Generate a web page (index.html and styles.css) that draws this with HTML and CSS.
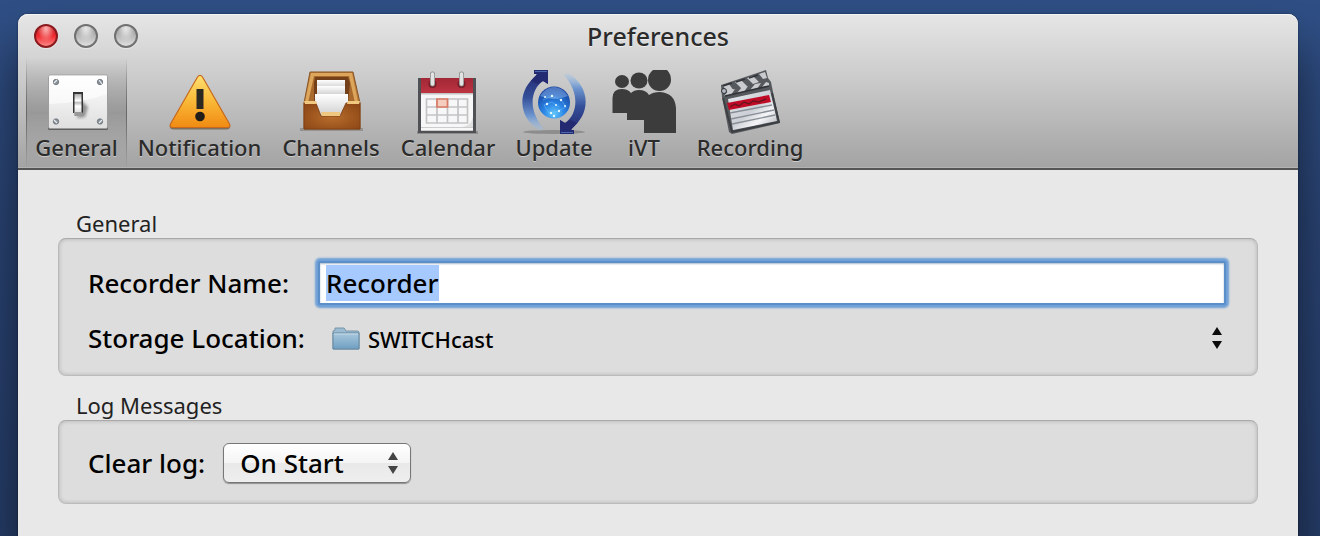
FILE: index.html
```html
<!DOCTYPE html>
<html lang="en">
<head>
<meta charset="utf-8">
<title>Preferences</title>
<link rel="stylesheet" href="styles.css">
</head>
<body>
<main class="window">
  <header class="chrome">
    <div class="titlebar">
      <div class="lights">
        <button class="light light-close" aria-label="Close"></button>
        <button class="light" aria-label="Minimize"></button>
        <button class="light" aria-label="Zoom"></button>
      </div>
      <h1 class="title">Preferences</h1>
    </div>
    <nav class="toolbar" aria-label="Preference panes">
      <button class="tool tool-active" aria-pressed="true">
        <svg class="icon" viewBox="0 0 64 64" aria-hidden="true">
          <defs>
            <linearGradient id="plate" x1="0" y1="0" x2="0" y2="1"><stop offset="0" stop-color="#fff"/><stop offset="1" stop-color="#dfdfdf"/></linearGradient>
            <linearGradient id="lever" x1="0" y1="0" x2="0" y2="1"><stop offset="0" stop-color="#aaa"/><stop offset=".3" stop-color="#fff"/><stop offset=".4" stop-color="#bbb"/><stop offset=".55" stop-color="#fff"/><stop offset="1" stop-color="#ccc"/></linearGradient>
            <filter id="soft"><feGaussianBlur stdDeviation="1.6"/></filter>
          </defs>
          <rect x="3" y="6" width="60" height="54" rx="1.5" fill="#606060"/>
          <rect x="3.500" y="5" width="59" height="53.500" rx="1.500" fill="url(#plate)" stroke="#999" stroke-width=".7"/>
          <path d="M4 34Q38 33 62 24V6H4Z" fill="#fff" opacity=".6"/>
          <path d="M36 30l7 7-3 10-8 1Z" fill="#555" opacity=".6" filter="url(#soft)"/>
          <path d="M28 22h10v21H28Z" fill="#333"/>
          <path d="M29.500 24h7v19l-1 3h-6Z" fill="url(#lever)"/>
          <path d="M29 42h8.500l-1 4h-7Z" fill="#999"/>
          <g fill="#8b9299" stroke="#5d646b" stroke-width=".7"><circle cx="11" cy="12" r="2.700"/><circle cx="55" cy="12" r="2.700"/><circle cx="11" cy="51.500" r="2.700"/><circle cx="55" cy="51.500" r="2.700"/></g>
          <path d="M9 13l3-3M54 10l3 4M9 50l3 3M54 53l3-3" stroke="#e8edf2" stroke-width="1.200"/>
        </svg>
        <span>General</span>
      </button>
      <button class="tool">
        <svg class="icon" viewBox="0 0 64 64" aria-hidden="true">
          <defs><linearGradient id="warn" x1="0" y1="0" x2="0" y2="1"><stop offset="0" stop-color="#ffdf72"/><stop offset=".45" stop-color="#fbbd3c"/><stop offset="1" stop-color="#f08a12"/></linearGradient></defs>
          <path d="M29 8Q32 3 35 8L62 55Q63 59 59 59.500H5Q1 59 2 55Z" fill="#6a5a46" opacity=".75"/>
          <path d="M29.500 7Q32 3.500 34.500 7L61.500 54Q63 57.500 59 57.500H5Q1 57.500 2.500 54Z" fill="url(#warn)" stroke="#c8691d" stroke-width="1.200"/>
          <path d="M28.500 19h7v20h-7Z" fill="#2c2923"/><circle cx="32" cy="46.500" r="4.800" fill="#211d18"/>
        </svg>
        <span>Notification</span>
      </button>
      <button class="tool">
        <svg class="icon" viewBox="0 0 64 64" aria-hidden="true">
          <defs>
            <radialGradient id="wood" cx=".5" cy=".55" r=".65"><stop offset="0" stop-color="#b66d2c"/><stop offset="1" stop-color="#8e4716"/></radialGradient>
            <linearGradient id="paper" x1="0" y1="0" x2="0" y2="1"><stop offset="0" stop-color="#fff"/><stop offset="1" stop-color="#cfcfcf"/></linearGradient>
          </defs>
          <path d="M1 58h63v3H1Z" fill="#555" opacity=".35"/>
          <path d="M11 2h43l7 31v26H5V33Z" fill="#b87a38" stroke="#8b5524"/>
          <path d="M12 3h41l6 29H6Z" fill="#dca65c"/>
          <path d="M15 6h35l6 27H9Z" fill="#a9692c"/>
          <path d="M16 7h33l2 6-2 20H15V13Z" fill="#74401a"/>
          <path d="M18 10h28v8H18Z" fill="url(#paper)"/><path d="M18 16h28v9H18Z" fill="url(#paper)"/><path d="M16 24h33v13l-7 9H22l-6-9Z" fill="url(#paper)"/>
          <path d="M5 33h12l5 13h19l6-13h14v26H5Z" fill="url(#wood)" stroke="#7b3c12" stroke-width=".8"/>
          <path d="M5 31h12l1 3H6ZM61 31H49l-1 3h12ZM22 42h19v4H23Z" fill="#efc781"/>
        </svg>
        <span>Channels</span>
      </button>
      <button class="tool">
        <svg class="icon" viewBox="0 0 64 64" aria-hidden="true">
          <defs><linearGradient id="red" x1="0" y1="0" x2="0" y2="1"><stop offset="0" stop-color="#a12735"/><stop offset="1" stop-color="#bd3442"/></linearGradient></defs>
          <path d="M1 61h61v3H1Z" fill="#555" opacity=".4"/>
          <rect x="2" y="8" width="58" height="55" fill="#505154"/>
          <path d="M5 23h52v37H5Z" fill="#f7f7f7"/><path d="M5 57h52v1H5ZM5 60h52v1H5Z" fill="#ccc"/>
          <path d="M5 8h52v15H5Z" fill="url(#red)"/><path d="M5 23h52v1.500H5Z" fill="#c3c3c3"/>
          <path d="M10.500 29h41v24h-41ZM21 29v24M31.500 29v24M42 29v24M11 37h41M11 45h41" fill="none" stroke="#c3c3c6" stroke-width="1.700"/>
          <path d="M21 29h10.500v8H21Z" fill="#f4cdbf" stroke="#d87963" stroke-width="1.700"/>
          <path d="M57 47v10H46q9-1 11-10" fill="#e0e0e0"/>
          <circle cx="16.500" cy="14" r="4" fill="#781c28"/><circle cx="45.500" cy="14" r="4" fill="#781c28"/>
          <path d="M16.500 4v10M45.500 4v10" stroke="#888" stroke-width="5" stroke-linecap="round"/><path d="M16.500 4v10M45.500 4v10" stroke="#e3e3e3" stroke-width="3.500" stroke-linecap="round"/>
        </svg>
        <span>Calendar</span>
      </button>
      <button class="tool">
        <svg class="icon" viewBox="0 0 64 64" aria-hidden="true">
          <defs>
            <linearGradient id="arcl" x1="0" y1="0" x2="0" y2="1"><stop offset="0" stop-color="#20256c"/><stop offset=".45" stop-color="#344f99"/><stop offset=".75" stop-color="#6d95ce"/><stop offset="1" stop-color="#9dc4f0" stop-opacity=".2"/></linearGradient>
            <linearGradient id="arcr" x1="0" y1="1" x2="0" y2="0"><stop offset="0" stop-color="#20256c"/><stop offset=".45" stop-color="#344f99"/><stop offset=".75" stop-color="#6d95ce"/><stop offset="1" stop-color="#9dc4f0" stop-opacity=".2"/></linearGradient>
            <radialGradient id="globe" cx=".5" cy=".85" r=".8"><stop offset="0" stop-color="#62c6fb"/><stop offset=".4" stop-color="#2c86e6"/><stop offset="1" stop-color="#153d9b"/></radialGradient>
          </defs>
          <ellipse cx="32" cy="62" rx="31" ry="2" fill="#555" opacity=".4"/>
          <path d="M12 0H26V14L21 11C8 20 6 41 22 59L18 61C-5 47-5 20 15 5Z" fill="url(#arcl)"/>
          <path d="M52 64H38V50L43 53C56 44 58 23 42 5L46 3C69 17 69 44 49 59Z" fill="url(#arcr)"/>
          <path d="M12 0H26V14L21 11 16 14 9 11 15 4 12 4ZM52 64H38V50L43 53 48 50 55 53 49 60 52 60Z" fill="#242a72"/>
          <path d="M13 1.500H25M39 62.500H51" stroke="#4a67ae"/>
          <circle cx="32" cy="32.500" r="16" fill="url(#globe)"/>
          <path d="M18 26Q24 17 32 17T46 26Q32 32 18 26" fill="#a9d3fa" opacity=".4"/>
          <path d="M21 30l9-4 9 4 5 7-8 4-9 2-5-8 8-3 7 5" fill="none" stroke="#75c8ff" stroke-width="1" opacity=".45"/>
          <g fill="#e3f8ff"><circle cx="23" cy="27" r="1"/><circle cx="30" cy="26" r="1.200"/><circle cx="39" cy="30" r="1.200"/><circle cx="25" cy="34" r="1.200"/><circle cx="34" cy="35" r="1"/><circle cx="37" cy="41" r="1.200"/><circle cx="43" cy="36" r="1"/><circle cx="29" cy="43" r="1.200"/><circle cx="32" cy="46" r="1.200"/></g>
        </svg>
        <span>Update</span>
      </button>
      <button class="tool">
        <svg class="icon" viewBox="0 0 64 64" aria-hidden="true">
          <g fill="#3c3c3c"><ellipse cx="10" cy="11.500" rx="7" ry="6.500"/><ellipse cx="27" cy="10.500" rx="8.500" ry="8"/><path d="M41 0h14q4 4 4 10a11.500 11 0 0 1-23 0q0-6 5-10Z"/>
          <path d="M.5 43V28q0-9 9.500-9 6 0 9 4 3-3 8-3 7 0 10 5 4-3 11-3 15 1 16 16v25H32V50H15v-7Z"/></g>
        </svg>
        <span>iVT</span>
      </button>
      <button class="tool">
        <svg class="icon" viewBox="0 0 64 64" aria-hidden="true">
          <defs><linearGradient id="slate" x1="0" y1="0" x2="1" y2="1"><stop offset="0" stop-color="#e6e8ec"/><stop offset=".5" stop-color="#ccd0d6"/><stop offset=".7" stop-color="#f5f5f8"/><stop offset="1" stop-color="#a9adb3"/></linearGradient></defs>
          <path d="M3 15L48 0 50 8 53 12 55 22 62 53 14 64 11 62 4 27Z" fill="#55585c"/>
          <path d="M10 29L52 20 59 51 15 60Z" fill="url(#slate)"/>
          <path d="M9 33L51 25 53 32 11 40Z" fill="#c00a26"/>
          <path d="M12 37l5-3 4 2 5-4 5 2 4-3 6 1 7-3" fill="none" stroke="#6a1420" stroke-width="1.400"/>
          <path d="M12 43L54 35M13 49L56 40M14 54L57 45" stroke="#888e96" stroke-width="1.300"/>
          <path d="M5 16l6-2 5 7-6 2ZM17 12l6-2 6 6-6 2ZM29 8l6-2 6 6-6 2ZM41 4l6-2 2 6-4 1ZM6 26l5-6 6-1-4 6ZM19 23l5-6 6-1-4 6ZM32 20l5-6 6-1-4 6ZM44 17l4-5 3 1 0 3Z" fill="#c9cbce"/>
          <path d="M5 16l9-3M18 12l9-3M31 8l9-3M7 26L51 16" stroke="#303338" stroke-width="1.600"/>
          <circle cx="6" cy="21" r="2.500" fill="#aeb6c2" stroke="#333"/>
          <path d="M5 28l9 34 47-10L54 23" fill="none" stroke="#3b3e42" stroke-width="1.800"/>
        </svg>
        <span>Recording</span>
      </button>
    </nav>
  </header>

  <form class="content">
    <section class="group" aria-labelledby="general-heading">
      <h2 class="group-title" id="general-heading">General</h2>
      <div class="box box-general">
        <label class="label" for="recorder">Recorder Name:</label>
        <input class="field" id="recorder" type="text" value="Recorder" autofocus>
        <label class="label" for="storage">Storage Location:</label>
        <div class="picker picker-plain">
          <svg class="folder" viewBox="0 0 28 24" aria-hidden="true">
            <defs><linearGradient id="fold" x1="0" y1="0" x2="0" y2="1"><stop offset="0" stop-color="#a9c8dd"/><stop offset="1" stop-color="#6f9fc2"/></linearGradient></defs>
            <path d="M1 23V5l2-1V2h9l2 3h12l1 1v17Z" fill="#9abbd1" stroke="#7795a8"/>
            <path d="M1 7h26v16H1Z" fill="url(#fold)" stroke="#6688a0"/>
            <path d="M2 8h24" stroke="#c5dae7"/>
          </svg>
          <select class="select select-plain" id="storage"><option>SWITCHcast</option></select>
          <svg class="arrows" viewBox="0 0 10 22" aria-hidden="true"><path d="M5 0l5 8H0ZM5 22l5-8H0Z" fill="#0b0b0b"/></svg>
        </div>
      </div>
    </section>
    <section class="group" aria-labelledby="log-heading">
      <h2 class="group-title" id="log-heading">Log Messages</h2>
      <div class="box box-log">
        <label class="label" for="clear">Clear log:</label>
        <div class="picker">
          <select class="select select-button" id="clear"><option>On Start</option></select>
          <svg class="arrows" viewBox="0 0 10 22" aria-hidden="true"><path d="M5 0l5 8H0ZM5 22l5-8H0Z" fill="#444"/></svg>
        </div>
      </div>
    </section>
  </form>
</main>
<script src="main.js"></script>
</body>
</html>
```
FILE: main.js
```js
const field = document.getElementById("recorder");
field.focus();
field.select();
```
FILE: styles.css
```css
* { box-sizing: border-box; }

html { height: 100%; }

body {
  margin: 0;
  min-height: 100%;
  display: flex;
  padding: 14px 22px 0 18px;
  background: linear-gradient(#2f4f85, #2a4474 40%, #263d69);
  font-family: "Noto Sans", "Open Sans", sans-serif;
  font-weight: 500;
  color: #000;
  overflow: hidden;
}

button, input, select {
  font: inherit;
  color: inherit;
}

.window {
  flex: 1;
  border-radius: 10px 10px 0 0;
  background: #e8e8e8;
  box-shadow: 0 0 2px rgba(0, 0, 0, .5), 0 34px 50px rgba(0, 0, 0, .55);
}

.chrome {
  border-bottom: 2px solid #555;
  border-radius: 10px 10px 0 0;
  background: linear-gradient(#e6e6e6, #c9c9c9 45%, #a3a3a3);
  box-shadow: inset 0 1px #f4f4f4, inset 0 -1px #b3b3b3;
  color: #2b2b2b;
}

.titlebar {
  display: grid;
  grid-template-columns: 1fr auto 1fr;
  align-items: center;
  height: 44px;
  padding: 0 16px;
}

.lights { display: flex; gap: 16px; }

.light {
  width: 24px;
  height: 24px;
  padding: 0;
  border: 2px solid #707070;
  border-radius: 50%;
  background: radial-gradient(ellipse at 50% 20%, #e6e6e6 0, #d4d4d4 20%, transparent 50%), linear-gradient(#8f8f8f, #b8b8b8 50%, #e8e8e8);
  background-origin: border-box;
  box-shadow: 0 1px #e8e8e8;
}

.light-close {
  border-color: #8a1a1e;
  background: radial-gradient(ellipse at 50% 20%, #fab4b4 0, #f47c7c 20%, transparent 50%), linear-gradient(#b01d22, #f02a2f 50%, #ff9a98);
  background-origin: border-box;
}

.title {
  margin: 0;
  font-size: 25px;
  line-height: 32px;
  font-weight: 500;
  text-shadow: 0 1px #eee;
}

.toolbar {
  display: grid;
  grid-template-columns: 101px 145px 118px 116px 96px 84px 128px;
  height: 110px;
  padding-left: 8px;
}

.tool {
  display: flex;
  flex-direction: column;
  align-items: center;
  padding: 12px 0 0;
  border: 0;
  background: none;
  font-size: 22px;
  line-height: 26px;
  text-shadow: 0 1px #ccc;
  white-space: nowrap;
}

.tool-active {
  border: solid;
  border-width: 0 1px;
  border-image: linear-gradient(transparent, #666 50%, transparent) 1;
  background: linear-gradient(transparent, #999 50%, transparent);
}

.icon {
  width: 64px;
  height: 64px;
  flex: none;
}

.content {
  display: flex;
  flex-direction: column;
  gap: 14px;
  padding: 38px 40px 32px;
}

.group-title {
  margin: 0 18px;
  font-size: 22px;
  line-height: 30px;
  font-weight: 400;
  color: #222;
}

.box {
  border: 1px solid;
  border-color: #a9a9a9 #b9b9b9 #bbb;
  border-radius: 8px;
  background: #ddd;
  box-shadow: inset 0 0 4px rgba(0, 0, 0, .2);
  font-size: 26px;
  line-height: 34px;
}

.box-general {
  display: grid;
  grid-template-columns: 230px 1fr;
  row-gap: 15px;
  align-items: center;
  padding: 22px 31px 19px 29px;
}

.box-log {
  display: flex;
  align-items: center;
  gap: 18px;
  padding: 22px 29px 20px;
}

.label { white-space: nowrap; }

.field {
  width: 100%;
  height: 44px;
  padding: 0 6px;
  border: 2px solid #5b8fca;
  border-radius: 2px;
  outline: 0;
  background: #fff;
  box-shadow: 0 0 2px 3px #6fa0d7, inset 0 1px 2px #a9b9ca;
}

.field::selection {
  background: rgba(166, 201, 255, .996);
  color: #000;
}

.picker {
  display: grid;
  align-items: center;
}

.picker > * { grid-area: 1 / 1; }

.picker-plain { padding-left: 14px; }

.folder {
  width: 28px;
  height: 24px;
}

.select {
  appearance: none;
  margin: 0;
  border: 0;
  outline: 0;
}

.select-plain {
  width: 100%;
  height: 36px;
  padding: 2px 30px 0 36px;
  background: none;
  font-size: 22px;
}

.select-button {
  width: 188px;
  height: 40px;
  padding: 0 40px 0 16px;
  border: 1px solid #777;
  border-radius: 6px;
  background: linear-gradient(#fff, #f4f4f4 50%, #e9e9e9 51%, #eee);
  box-shadow: 0 1px 1px rgba(0, 0, 0, .35);
}

.arrows {
  width: 10px;
  height: 22px;
  justify-self: end;
  margin-right: 13px;
  pointer-events: none;
}

.picker-plain .arrows { margin-right: 4px; }
```
